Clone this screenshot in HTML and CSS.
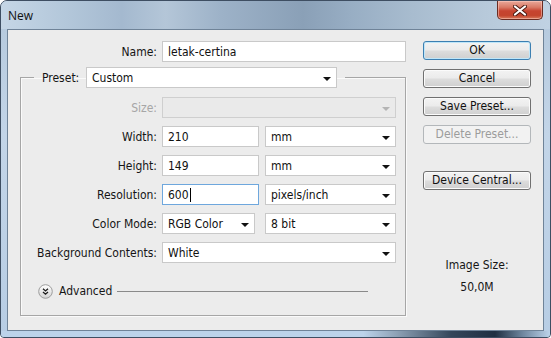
FILE: index.html
```html
<!DOCTYPE html>
<html lang="en">
<head>
  <meta charset="UTF-8">
  <title>New</title>
  <link rel="stylesheet" href="styles.css">
</head>
<body>
  <div class="window">
    <!-- Title bar -->
    <div class="titlebar">
      <span class="title">New</span>
      <div class="close-btn">
        <svg width="14" height="11" viewBox="0 0 14 11">
          <path d="M2 1.5 L12 9.5 M12 1.5 L2 9.5" stroke="#4a1a12" stroke-width="4" stroke-linecap="round"/>
          <path d="M2 1.5 L12 9.5 M12 1.5 L2 9.5" stroke="#ffffff" stroke-width="2.2" stroke-linecap="round"/>
        </svg>
      </div>
    </div>

    <div class="client">
      <div class="main">
        <div class="row name-row">
          <label class="lbl name-lbl">Name:</label>
          <div class="field text name-field">letak-certina</div>
        </div>

        <fieldset class="preset-box">
          <legend class="preset-legend">
            <div class="legend-inner">
              <label class="preset-lbl">Preset:</label>
              <div class="field drop preset-drop">Custom</div>
            </div>
          </legend>

          <div class="row">
            <label class="lbl disabled">Size:</label>
            <div class="field drop wide is-disabled"></div>
          </div>
          <div class="row">
            <label class="lbl">Width:</label>
            <div class="field text num">210</div>
            <div class="field drop unit">mm</div>
          </div>
          <div class="row">
            <label class="lbl">Height:</label>
            <div class="field text num">149</div>
            <div class="field drop unit">mm</div>
          </div>
          <div class="row">
            <label class="lbl">Resolution:</label>
            <div class="field text num focused">600<span class="caret"></span></div>
            <div class="field drop unit">pixels/inch</div>
          </div>
          <div class="row">
            <label class="lbl">Color Mode:</label>
            <div class="field drop mode">RGB Color</div>
            <div class="field drop unit">8 bit</div>
          </div>
          <div class="row">
            <label class="lbl">Background Contents:</label>
            <div class="field drop wide">White</div>
          </div>

          <div class="advanced">
            <span class="adv-icon">
              <svg width="15" height="15" viewBox="0 0 15 15">
                <defs>
                  <linearGradient id="advg" x1="0" y1="0" x2="0" y2="1">
                    <stop offset="0" stop-color="#ffffff"/>
                    <stop offset="1" stop-color="#d4d4d4"/>
                  </linearGradient>
                </defs>
                <circle cx="7.5" cy="7.5" r="6.8" fill="url(#advg)" stroke="#9c9c9c"/>
                <path d="M5 4.8 L7.5 7 L10 4.8 M5 8 L7.5 10.2 L10 8" fill="none" stroke="#1e1e1e" stroke-width="1.3"/>
              </svg>
            </span>
            <span class="adv-text">Advanced</span>
            <span class="adv-line"></span>
          </div>
        </fieldset>
      </div>

      <div class="side">
        <div class="btn default">OK</div>
        <div class="btn">Cancel</div>
        <div class="btn">Save Preset...</div>
        <div class="btn disabled">Delete Preset...</div>
        <div class="btn device">Device Central...</div>
        <div class="image-size">Image Size:</div>
        <div class="image-size-val">50,0M</div>
      </div>
    </div>

    <div class="frame-bottom"></div>
  </div>
</body>
</html>
```

FILE: styles.css
```css
* {
  box-sizing: border-box;
}
body {
  margin: 0;
  background: #ffffff;
  font-family: "DejaVu Sans Condensed", Tahoma, "DejaVu Sans", sans-serif;
  font-size: 12px;
  color: #151515;
}
.window {
  width: 551px;
  height: 338px;
  border: 1px solid #3e4e62;
  border-radius: 7px 7px 4px 4px;
  overflow: hidden;
  display: flex;
  flex-direction: column;
  background: linear-gradient(180deg, #b4c8dc 0%, #c3d5e8 40%, #b7cde4 100%);
}

/* title bar */
.titlebar {
  height: 28px;
  display: flex;
  justify-content: space-between;
  align-items: flex-start;
  background: linear-gradient(90deg, #c5d6e6 0%, #b3c7da 12%, #a4b9cf 22%, #b4c6d8 30%, #9db2c8 40%, #8aa0b7 55%, #98aec4 64%, #a8bccf 75%, #b7c9da 88%, #c0d2e3 100%);
  flex-shrink: 0;
}
.title {
  font-family: "Open Sans", "Liberation Sans", sans-serif;
  font-size: 12px;
  color: #111;
  padding: 6px 0 0 7px;
}
.close-btn {
  width: 46px;
  height: 19px;
  margin-right: 7px;
  border: 1px solid #6a2c22;
  border-top: none;
  border-radius: 0 0 5px 5px;
  background: linear-gradient(180deg, #e9a99a 0%, #d97a66 35%, #c74430 55%, #c4442d 80%, #d77a5c 100%);
  box-shadow: inset 0 0 0 1px rgba(255, 210, 200, 0.5);
  display: flex;
  justify-content: center;
  align-items: center;
}

/* client area */
.client {
  flex: 1;
  margin: 0 6px;
  border: 1px solid #6f8398;
  background: #ececec;
  display: flex;
  padding: 11px 0 0 12px;
}
.main {
  width: 386px;
}
.row {
  display: flex;
  align-items: center;
  gap: 5px;
  height: 21px;
  margin-bottom: 8px;
}
.name-row {
  margin-bottom: 5px;
}
.lbl {
  width: 123px;
  text-align: right;
  flex-shrink: 0;
}
.name-lbl {
  width: 137px;
}
.lbl.disabled {
  color: #a6a6a6;
}

.field {
  height: 21px;
  flex-shrink: 0;
  border: 1px solid #c9c9c9;
  background: #ffffff;
  padding-left: 5px;
  display: flex;
  align-items: center;
  position: relative;
  color: #111;
}
.name-field {
  width: 244px;
}
.drop::after {
  content: "";
  position: absolute;
  right: 5px;
  top: 9px;
  border-left: 4px solid transparent;
  border-right: 4px solid transparent;
  border-top: 4px solid #111;
}
.drop.is-disabled {
  background: #eaeaea;
  border-color: #cfcfcf;
}
.drop.is-disabled::after {
  border-top-color: #b4b4b4;
}
.wide {
  width: 234px;
}
.num {
  width: 97px;
}
.unit {
  width: 131px;
  margin-left: 1px;
}
.mode {
  width: 93px;
  margin-right: 4px;
}
.focused {
  border-color: #6ea7dd;
}
.caret {
  display: inline-block;
  width: 1px;
  height: 14px;
  background: #000;
  margin-left: 1px;
}

/* preset group */
.preset-box {
  margin: 0;
  padding: 9px 8px 16px 13px;
  border: 1px solid #a6a6a6;
  box-shadow: inset 1px 1px 0 #fafafa, 1px 1px 0 #fafafa;
  min-inline-size: 0;
  width: 386px;
}
.preset-legend {
  padding: 0 8px;
}
.legend-inner {
  display: flex;
  align-items: center;
}
.preset-lbl {
  width: 38px;
  margin-right: 6px;
}
.preset-drop {
  width: 251px;
}

.advanced {
  display: flex;
  align-items: center;
  height: 16px;
  margin-top: 20px;
  padding-left: 4px;
}
.adv-icon {
  width: 15px;
  height: 15px;
  display: flex;
}
.adv-text {
  margin-left: 6px;
}
.adv-line {
  width: 251px;
  height: 1px;
  margin-left: 5px;
  background: #8a8a8a;
}

/* buttons column */
.side {
  width: 108px;
  margin-left: 17px;
  display: flex;
  flex-direction: column;
  align-items: stretch;
}
.btn {
  height: 19px;
  margin-bottom: 9px;
  border: 1px solid #707070;
  border-radius: 3px;
  background: linear-gradient(180deg, #f3f3f3 0%, #ebebeb 48%, #dddddd 52%, #cfcfcf 100%);
  box-shadow: inset 0 0 0 1px #fbfbfb;
  text-align: center;
  line-height: 17px;
  color: #111;
}
.btn.default {
  border-color: #3c7fb1;
  box-shadow: inset 0 0 0 1px #bfe6f9;
}
.btn.disabled {
  border-color: #b3b7ba;
  background: #f2f2f2;
  box-shadow: none;
  color: #9c9c9c;
}
.btn.device {
  margin-top: 18px;
}
.image-size {
  margin-top: 59px;
  text-align: center;
  line-height: 15px;
}
.image-size-val {
  margin-top: 7px;
  text-align: center;
  line-height: 15px;
}

.frame-bottom {
  height: 6px;
  flex-shrink: 0;
  background: linear-gradient(90deg, #bcd3ea 0%, #bcd3ea 66%, #8ea2b6 72%, #34465a 82%, #1f2f42 90%, #6e869e 95%, #bcd3ea 100%);
}
```
